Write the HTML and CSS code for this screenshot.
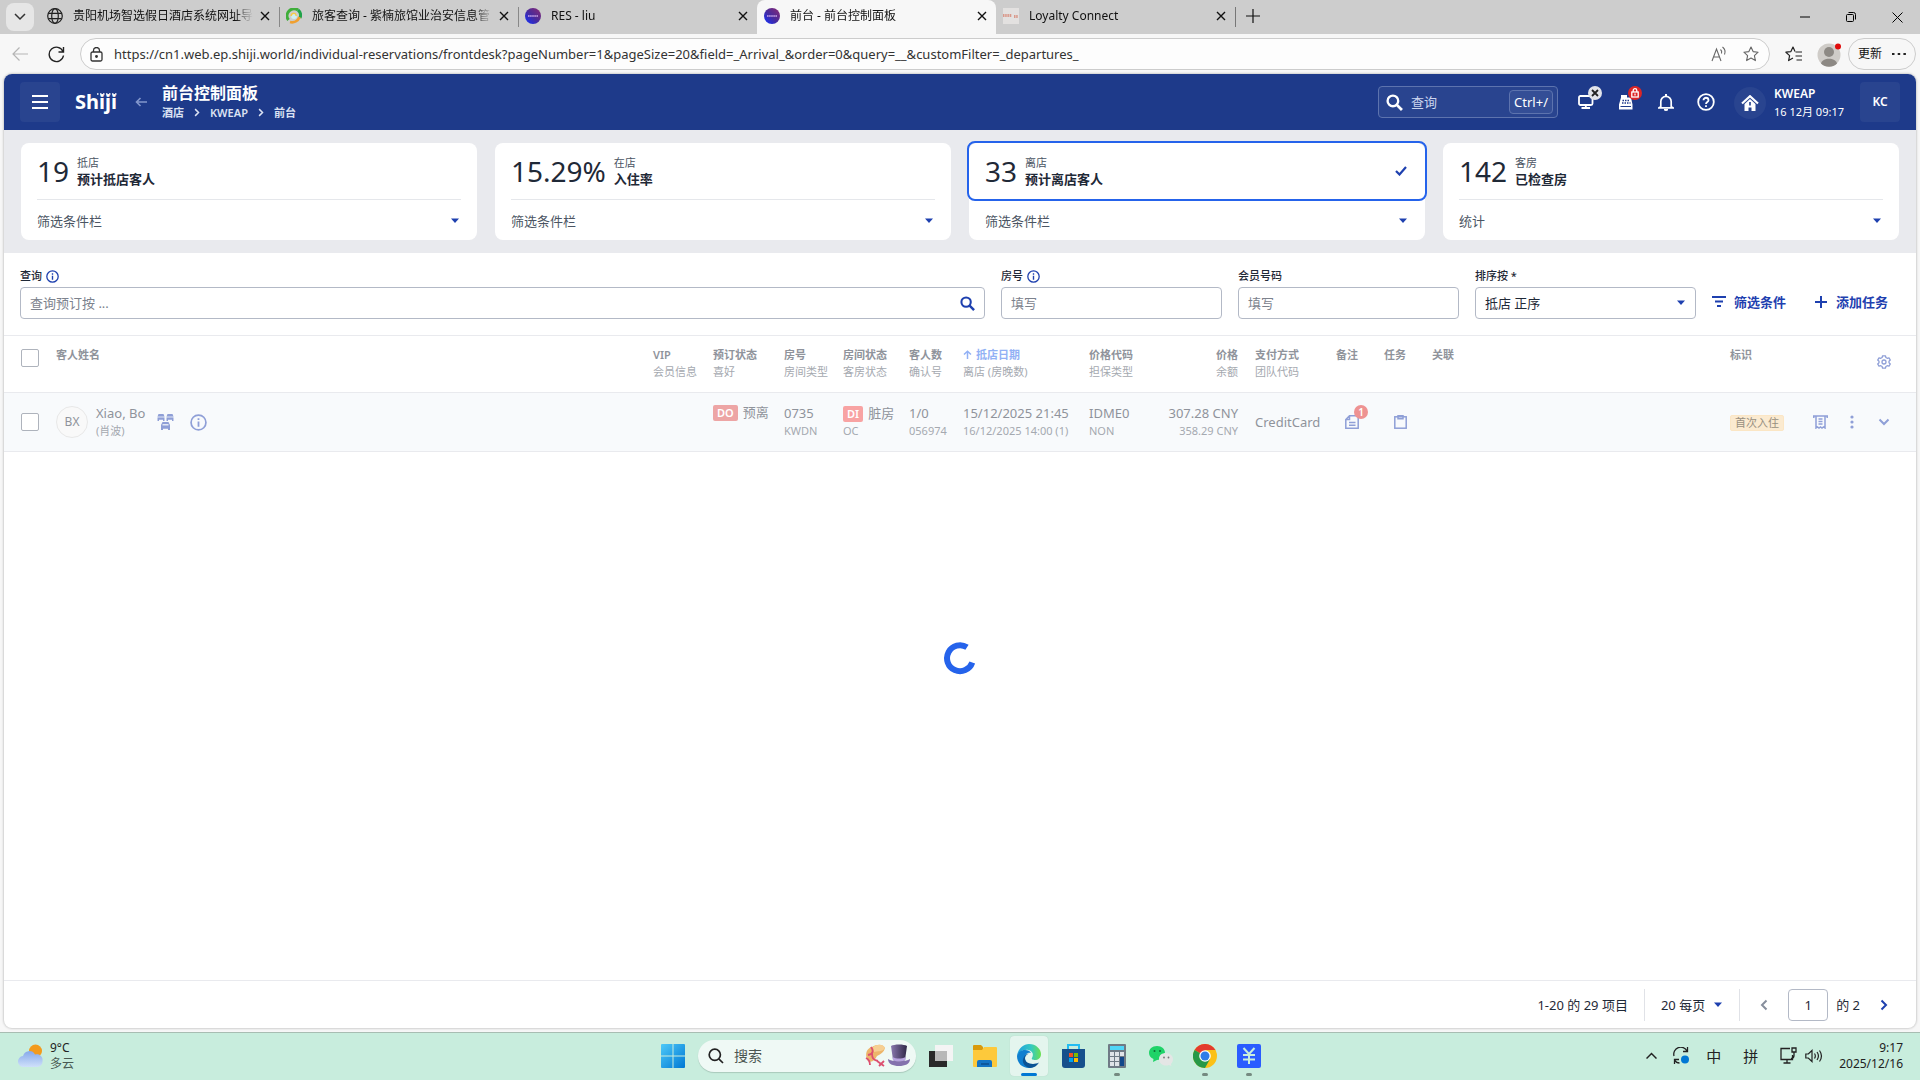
FILE: index.html
```html
<!DOCTYPE html>
<html lang="zh-CN">
<head>
<meta charset="utf-8">
<meta name="viewport" content="width=device-width, initial-scale=1">
<title>前台 - 前台控制面板</title>
<link rel="stylesheet" href="styles.css">
</head>
<body>
<svg class="defs" aria-hidden="true">
  <defs>
    <linearGradient id="g-fav" x1="1" y1="0" x2="0" y2="1"><stop offset="0" stop-color="#8c2a72"/><stop offset=".5" stop-color="#4a2a9a"/><stop offset="1" stop-color="#1030ff"/></linearGradient>
    <linearGradient id="g-win" x1="0" y1="0" x2="1" y2="1"><stop offset="0" stop-color="#4cc9f8"/><stop offset="1" stop-color="#0078d4"/></linearGradient>
    <linearGradient id="g-edge" x1="0" y1="0" x2="1" y2="0"><stop offset="0" stop-color="#1d9fe0"/><stop offset=".6" stop-color="#35c9c0"/><stop offset="1" stop-color="#6be04e"/></linearGradient>
    <linearGradient id="g-cloud" x1="0" y1="0" x2="0" y2="1"><stop offset="0" stop-color="#86a9ea"/><stop offset="1" stop-color="#cfe0fa"/></linearGradient>
    <linearGradient id="g-hat" x1="0" y1="0" x2="1" y2="0"><stop offset="0" stop-color="#8a78ae"/><stop offset="1" stop-color="#2f2747"/></linearGradient>
  </defs>
  <symbol id="i-close" viewBox="0 0 12 12"><path d="M2 2l8 8M10 2l-8 8" fill="none" stroke="currentColor" stroke-width="1.4"/></symbol>
  <symbol id="i-fav" viewBox="0 0 16 16"><circle cx="8" cy="8" r="8" fill="url(#g-fav)"/><path d="M3 8h10" stroke="#c9a5e8" stroke-width="1.6" stroke-dasharray="1.6 .5"/></symbol>
  <symbol id="i-caret" viewBox="0 0 10 6"><path d="M1 0.5h8L5 5z" fill="currentColor"/></symbol>
  <symbol id="i-info" viewBox="0 0 16 16"><circle cx="8" cy="8" r="7" fill="none" stroke="currentColor" stroke-width="1.6"/><path d="M8 7v5M8 4v1.7" stroke="currentColor" stroke-width="1.7"/></symbol>
  <symbol id="i-search" viewBox="0 0 16 16"><circle cx="6.5" cy="6.5" r="5" fill="none" stroke="currentColor" stroke-width="2.2"/><path d="M10 10l5 5" stroke="currentColor" stroke-width="2.6"/></symbol>
  <symbol id="i-chev" viewBox="0 0 8 12"><path d="M1.5 1.5L6 6l-4.500 4.500" fill="none" stroke="currentColor" stroke-width="2"/></symbol>
</svg>

<div class="tabstrip">
  <button class="tab-menu" aria-label="标签页操作"><svg width="12" height="8" viewBox="0 0 12 8"><path d="M1 1l5 5 5-5" fill="none" stroke="currentColor" stroke-width="1.5"/></svg></button>
  <div class="tab"><svg width="16" height="16" viewBox="0 0 16 16" fill="none" stroke="#222" stroke-width="1.200"><circle cx="8" cy="8" r="7.300"/><ellipse cx="8" cy="8" rx="3.300" ry="7.300"/><path d="M1.300 5.400h13.400M1.300 10.600h13.400"/></svg><span class="tab-title">贵阳机场智选假日酒店系统网址导</span><button class="tab-x" aria-label="关闭"><svg width="12" height="12"><use href="#i-close"/></svg></button></div>
  <div class="tab ruled"><svg width="16" height="16" viewBox="0 0 16 16"><path d="M2.500 12A7 7 0 0 1 12 2" fill="none" stroke="#3fae3a" stroke-width="3"/><path d="M12 2a7 7 0 0 1 2 8" fill="none" stroke="#1fa34a" stroke-width="3"/><path d="M4 14c4 1 8-1 9.500-5" fill="none" stroke="#f0a030" stroke-width="2.800"/><circle cx="8" cy="8" r="3" fill="#cfeff2"/><path d="M5 8c1-4 6-3 5 0" fill="none" stroke="#f7c948" stroke-width="1.500"/></svg><span class="tab-title">旅客查询 - 紫楠旅馆业治安信息管</span><button class="tab-x" aria-label="关闭"><svg width="12" height="12"><use href="#i-close"/></svg></button></div>
  <div class="tab ruled"><svg width="16" height="16"><use href="#i-fav"/></svg><span class="tab-title">RES - liu</span><button class="tab-x" aria-label="关闭"><svg width="12" height="12"><use href="#i-close"/></svg></button></div>
  <div class="tab active"><svg width="16" height="16"><use href="#i-fav"/></svg><span class="tab-title">前台 - 前台控制面板</span><button class="tab-x" aria-label="关闭"><svg width="12" height="12"><use href="#i-close"/></svg></button></div>
  <div class="tab"><svg width="16" height="16" viewBox="0 0 16 16"><path d="M0 0h16v16H0z" fill="#e3e1e0"/><path d="M0 7.500h9M11 8.500h4" stroke="#d9998b" stroke-width="3" stroke-dasharray="1.500 .7"/></svg><span class="tab-title">Loyalty Connect</span><button class="tab-x" aria-label="关闭"><svg width="12" height="12"><use href="#i-close"/></svg></button></div>
  <button class="tab-new" aria-label="新建标签页"><svg width="14" height="14" viewBox="0 0 14 14"><path d="M7 0v14M0 7h14" stroke="currentColor" stroke-width="1.200"/></svg></button>
  <div class="win-buttons">
    <button aria-label="最小化"><svg width="10" height="10" viewBox="0 0 10 10"><path d="M0 5h10" stroke="#000"/></svg></button>
    <button aria-label="还原"><svg width="10" height="10" viewBox="0 0 10 10" fill="none" stroke="#000"><rect x=".5" y="2.500" width="7" height="7" rx="1"/><path d="M2.500.5h5a2 2 0 0 1 2 2v5"/></svg></button>
    <button aria-label="关闭窗口"><svg width="11" height="11" viewBox="0 0 11 11"><path d="M.5.5l10 10M10.500.5l-10 10" stroke="#000"/></svg></button>
  </div>
</div>

<div class="toolbar">
  <button class="tool" aria-label="后退"><svg width="16" height="14" viewBox="0 0 16 14" fill="none" stroke="#b5b5b5" stroke-width="1.200"><path d="M16 7H1M7.500.5L1 7l6.500 6.500"/></svg></button>
  <button class="tool" aria-label="刷新"><svg width="17" height="17" viewBox="0 0 17 17" fill="none" stroke="#222" stroke-width="1.400"><path d="M15.500 9.500A7.200 7.200 0 1 1 15 5.500M15.500 1v5h-5"/></svg></button>
  <div class="address">
    <svg width="13" height="15" viewBox="0 0 13 15" fill="none" stroke="#333" stroke-width="1.300"><rect x="1" y="5" width="11" height="9" rx="1.500"/><path d="M3.500 5V3.500a3 3 0 0 1 6 0V5"/><circle cx="6.500" cy="9.500" r=".8" fill="#333"/></svg>
    <input type="text" aria-label="地址栏" value="https://cn1.web.ep.shiji.world/individual-reservations/frontdesk?pageNumber=1&amp;pageSize=20&amp;field=_Arrival_&amp;order=0&amp;query=__&amp;customFilter=_departures_">
    <svg width="16" height="16" viewBox="0 0 16 16" fill="none" stroke="#666" stroke-width="1.100"><path d="M1 15L5.500 3 10 15M2.500 11h6M9.500 3.500c1.200 1 1.500 2.500 1 4M11.500 1c2.500 2 3.200 4.500 2 7.500"/></svg>
    <svg width="16" height="16" viewBox="0 0 16 16" fill="none" stroke="#666" stroke-width="1.100" stroke-linejoin="round"><path d="M8 1l2.100 4.600 5 .6-3.700 3.400 1 5L8 12.100l-4.400 2.500 1-5L.9 6.200l5-.6z"/></svg>
  </div>
  <button class="tool" aria-label="收藏夹"><svg width="17" height="16" viewBox="0 0 17 16" fill="none" stroke="#222" stroke-width="1.200" stroke-linejoin="round"><path d="M10 5.600L8 1 5.900 5.600l-5 .6 3.700 3.400-1 5L8 12.100M10.500 6H17M10.500 10H17M11.500 14H17"/></svg></button>
  <button class="tool" aria-label="个人资料"><svg width="26" height="26" viewBox="0 0 26 26"><circle cx="12" cy="14" r="11.500" fill="#cfccc8"/><circle cx="12" cy="11" r="5" fill="#8d8984"/><path d="M4 22.500c1-6.500 15-6.500 16 0a11.500 11.500 0 0 1-16 0z" fill="#8d8984"/><circle cx="21" cy="5.500" r="3" fill="#e00b0b"/></svg></button>
  <button class="update">更新<svg width="14" height="4" viewBox="0 0 14 4"><path d="M0 1h2.500v2H0zM5.700 1h2.500v2H5.700zM11.400 1h2.500v2h-2.500z" fill="#222"/></svg></button>
</div>

<main class="app">
  <header class="app-bar">
    <button class="square" aria-label="菜单"><svg width="16" height="14" viewBox="0 0 16 14"><path d="M0 1h16M0 7h16M0 13h16" stroke="#fff" stroke-width="2"/></svg></button>
    <a class="logo" href="#">Shiji<svg width="20" height="2" viewBox="0 0 20 2"><path d="M0 1h20" stroke="#fff" stroke-width="1.500" stroke-dasharray="1.500 1.500"/></svg></a>
    <button class="back" aria-label="返回"><svg width="12" height="10" viewBox="0 0 12 10" fill="none" stroke="#8296cc" stroke-width="1.600"><path d="M12 5H1.500M5.500 1l-4 4 4 4"/></svg></button>
    <div class="heading">
      <h1>前台控制面板</h1>
      <nav class="crumbs"><a href="#">酒店</a><svg width="6" height="9"><use href="#i-chev"/></svg><a href="#">KWEAP</a><svg width="6" height="9"><use href="#i-chev"/></svg><a href="#">前台</a></nav>
    </div>
    <label class="quick"><svg width="17" height="17"><use href="#i-search"/></svg><input type="text" aria-label="查询" placeholder="查询"><kbd>Ctrl+/</kbd></label>
    <div class="bar-icons">
      <button class="bar-icon" aria-label="终端"><svg width="16" height="14" viewBox="0 0 16 14" fill="none" stroke="#fff"><rect x="1" y="1" width="13.500" height="9" rx="1.500" stroke-width="1.800"/><path d="M7.800 10v3M3.500 13h8.500" stroke-width="1.800"/></svg><span class="dot grey"><svg width="8" height="8" viewBox="0 0 8 8"><path d="M1 1l6 6M7 1L1 7" stroke="#222" stroke-width="1.800"/></svg></span></button>
      <button class="bar-icon" aria-label="收银"><svg width="16" height="15" viewBox="0 0 16 15"><path d="M3 0h6v2.500h4l1.500 7v5H1v-5L3 2.500z" fill="#fff"/><path d="M4.500 5.500h7.500M4 8h8.500" stroke="#1e3a8a" stroke-width="1.300" stroke-dasharray="1.500 1"/><path d="M2.500 11.500h10.500" stroke="#1e3a8a" stroke-width="1.200"/></svg><span class="dot red"><svg width="8" height="10" viewBox="0 0 8 10" fill="none" stroke="#fff" stroke-width="1.300"><rect x=".8" y="4" width="6.400" height="5"/><path d="M2.200 4V2.500a1.800 1.800 0 0 1 3.600 0V4M4 5.500v2"/></svg></span></button>
      <button class="bar-icon" aria-label="通知"><svg width="16" height="17" viewBox="0 0 16 17"><path d="M2.800 12.500V7.500a5.200 5.200 0 0 1 10.400 0v5l1.800 1.300H1z" fill="none" stroke="#fff" stroke-width="1.700"/><path d="M6 15h4v1a2 1 0 0 1-4 0zM7 0h2v2H7z" fill="#fff"/></svg></button>
      <button class="bar-icon" aria-label="帮助"><svg width="18" height="18" viewBox="0 0 18 18" fill="none" stroke="#fff" stroke-width="1.800"><circle cx="9" cy="9" r="7.800"/><path d="M6.500 7.200c0-3.300 5-3.300 5 0 0 1.800-2.500 1.800-2.500 3.800M9 12.200v1.800"/></svg></button>
    </div>
    <div class="property">
      <span class="home"><svg width="18" height="16" viewBox="0 0 18 16"><path d="M1 8.500L9 1.200l8 7.300" fill="none" stroke="#fff" stroke-width="2.200"/><path d="M3.500 9L9 4l5.500 5v7h-4v-3.500h-3V16h-4z" fill="#fff"/><path d="M9 7v3.500" stroke="#1e3a8a" stroke-width="1.600"/></svg></span>
      <div><strong>KWEAP</strong><span>16 12月 09:17</span></div>
    </div>
    <button class="square user">KC</button>
  </header>

  <section class="stats">
    <article class="card"><div class="card-top"><span class="num">19</span><div><small>抵店</small><strong>预计抵店客人</strong></div></div><button class="card-foot">筛选条件栏<svg width="10" height="6"><use href="#i-caret"/></svg></button></article>
    <article class="card"><div class="card-top"><span class="num">15.29%</span><div><small>在店</small><strong>入住率</strong></div></div><button class="card-foot">筛选条件栏<svg width="10" height="6"><use href="#i-caret"/></svg></button></article>
    <article class="card selected"><div class="card-top"><span class="num">33</span><div><small>离店</small><strong>预计离店客人</strong></div><svg class="tick" width="12" height="10" viewBox="0 0 12 10"><path d="M1 5l3.500 3.500L11 1" fill="none" stroke="#1e40af" stroke-width="2.200"/></svg></div><button class="card-foot">筛选条件栏<svg width="10" height="6"><use href="#i-caret"/></svg></button></article>
    <article class="card"><div class="card-top"><span class="num">142</span><div><small>客房</small><strong>已检查房</strong></div></div><button class="card-foot">统计<svg width="10" height="6"><use href="#i-caret"/></svg></button></article>
  </section>

  <form class="filters" onsubmit="return false">
    <div class="field"><label for="q">查询 <svg width="13" height="13"><use href="#i-info"/></svg></label><div class="box"><input id="q" type="text" placeholder="查询预订按 ..."><svg width="15" height="15"><use href="#i-search"/></svg></div></div>
    <div class="field"><label for="room">房号 <svg width="13" height="13"><use href="#i-info"/></svg></label><div class="box"><input id="room" type="text" placeholder="填写"></div></div>
    <div class="field"><label for="member">会员号码</label><div class="box"><input id="member" type="text" placeholder="填写"></div></div>
    <div class="field"><label for="sort">排序按 *</label><div class="box"><select id="sort"><option>抵店 正序</option></select><svg width="10" height="6"><use href="#i-caret"/></svg></div></div>
    <button class="link-btn" type="button"><svg width="14" height="12" viewBox="0 0 14 12"><path d="M0 1h14M3 5.500h8M5 10h4" stroke="currentColor" stroke-width="2"/></svg>筛选条件</button>
    <button class="link-btn" type="button"><svg width="14" height="14" viewBox="0 0 14 14"><path d="M7 1v12M1 7h12" stroke="currentColor" stroke-width="2"/></svg>添加任务</button>
  </form>

  <div class="results">
    <table>
      <colgroup><col class="w52"><col><col class="w60"><col class="w71"><col class="w59"><col class="w66"><col class="w54"><col class="w126"><col class="w61"><col class="w105"><col class="w81"><col class="w48"><col class="w48"><col class="w298"><col class="w74"><col class="w112"></colgroup>
      <thead><tr>
        <th class="pick"><input type="checkbox" aria-label="全选"></th>
        <th>客人姓名</th>
        <th>VIP<small>会员信息</small></th>
        <th>预订状态<small>喜好</small></th>
        <th>房号<small>房间类型</small></th>
        <th>房间状态<small>客房状态</small></th>
        <th>客人数<small>确认号</small></th>
        <th><a href="#" class="sorted"><svg width="9" height="9" viewBox="0 0 9 9" fill="none" stroke="currentColor" stroke-width="1.500"><path d="M4.500 9V1.200M1 4.500l3.500-3.300L8 4.500"/></svg>抵店日期</a><small>离店 (房晚数)</small></th>
        <th>价格代码<small>担保类型</small></th>
        <th class="price">价格<small>余额</small></th>
        <th>支付方式<small>团队代码</small></th>
        <th>备注</th>
        <th>任务</th>
        <th>关联</th>
        <th>标识</th>
        <th class="gear"><button aria-label="设置"><svg width="14" height="14" viewBox="0 0 14 14" fill="none" stroke="currentColor" stroke-width="1.300" stroke-linejoin="round"><path d="M5.600.8h2.800l.5 1.700 1.300.8 1.800-.5 1.300 2.300L12 6.300v1.400l1.300 1.200-1.300 2.300-1.800-.5-1.300.8-.5 1.700H5.600l-.5-1.700-1.300-.8-1.800.5L.7 8.900 2 7.700V6.300L.7 5.100 2 2.800l1.800.5 1.300-.8z"/><circle cx="7" cy="7" r="2"/></svg></button></th>
      </tr></thead>
      <tbody><tr>
        <td class="pick"><input type="checkbox" aria-label="选择 Xiao, Bo"></td>
        <td><div class="guest"><span class="initials">BX</span><div class="pair">Xiao, Bo<small>(肖波)</small></div>
          <svg width="17" height="16" viewBox="0 0 17 16" fill="currentColor"><path d="M1.500 0h5l1 2.500V7H6V5.800H2V7H.500V2.500zM10.500 0h5l1 2.500V7H15V5.800h-4V7H9.500V2.500z"/><path d="M5.500 8h6l1.500 3v5h-2v-1.300H6V16H4v-5z"/><path d="M0 3h17" stroke="#f8fafc" stroke-width=".8"/><path d="M5.500 10.800h6" stroke="#f8fafc" stroke-width="1.200"/></svg>
          <svg width="17" height="17"><use href="#i-info"/></svg></div></td>
        <td></td>
        <td><div class="pair raised"><span><b class="badge do">DO</b>预离</span><small>&nbsp;</small></div></td>
        <td><div class="pair">0735<small>KWDN</small></div></td>
        <td><div class="pair"><span><b class="badge di">DI</b>脏房</span><small>OC</small></div></td>
        <td><div class="pair">1/0<small>056974</small></div></td>
        <td><div class="pair">15/12/2025 21:45<small>16/12/2025 14:00 (1)</small></div></td>
        <td><div class="pair">IDME0<small>NON</small></div></td>
        <td class="price"><div class="pair">307.28 CNY<small>358.29 CNY</small></div></td>
        <td>CreditCard</td>
        <td><button class="row-icon" aria-label="备注"><svg width="14" height="14" viewBox="0 0 14 14" fill="none" stroke="currentColor" stroke-width="1.500"><path d="M4.500.8h8.700v12.400H.8V4.500zM4.500 1v3.500H1M4 7.500h6.500M4 10.300h6.500"/></svg><span class="count">1</span></button></td>
        <td><button class="row-icon" aria-label="任务"><svg width="13" height="14" viewBox="0 0 13 14" fill="none" stroke="currentColor" stroke-width="1.500"><rect x=".8" y="1.800" width="11.400" height="11.400"/><path d="M4 .8h5v3H4z"/></svg></button></td>
        <td></td>
        <td><span class="tag">首次入住</span></td>
        <td><div class="actions">
          <button aria-label="账单"><svg width="15" height="14" viewBox="0 0 15 14" fill="none" stroke="currentColor" stroke-width="1.500"><path d="M0 1h15M3 1v12l1.500-1 1.500 1 1.500-1 1.500 1 1.500-1 1.500 1V1M5.500 4h4M5.500 6.500h4M5.500 9h4M.8 1v2M14.200 1v2"/></svg></button>
          <button aria-label="更多"><svg width="4" height="14" viewBox="0 0 4 14" fill="currentColor"><circle cx="2" cy="2" r="1.600"/><circle cx="2" cy="7" r="1.600"/><circle cx="2" cy="12" r="1.600"/></svg></button>
          <button aria-label="展开"><svg width="12" height="8" viewBox="0 0 12 8"><path d="M1.500 1.500L6 6l4.500-4.500" fill="none" stroke="currentColor" stroke-width="2"/></svg></button>
        </div></td>
      </tr></tbody>
    </table>
    <svg class="spinner" width="34" height="34" viewBox="0 0 34 34" role="img" aria-label="加载中"><path d="M24 6.200A13 13 0 1 0 29.300 21.500" fill="none" stroke="#2563eb" stroke-width="6"/></svg>
  </div>

  <footer class="pager">
    <span>1-20 的 29 项目</span>
    <button class="per-page">20 每页<svg width="10" height="6"><use href="#i-caret"/></svg></button>
    <div class="pages">
      <button class="prev" aria-label="上一页"><svg width="8" height="12" viewBox="0 0 8 12"><path d="M6.500 1.500L2 6l4.500 4.500" fill="none" stroke="currentColor" stroke-width="2"/></svg></button>
      <input type="text" aria-label="页码" value="1">
      <span>的 2</span>
      <button class="next" aria-label="下一页"><svg width="8" height="12"><use href="#i-chev"/></svg></button>
    </div>
  </footer>
</main>

<div class="taskbar">
  <div class="weather"><svg width="26" height="24" viewBox="0 0 26 24"><circle cx="17.500" cy="7" r="6.500" fill="#f39a1c"/><path d="M6 23a5.500 5.500 0 0 1-1-11 6.500 6.500 0 0 1 12-1.500A5.800 5.800 0 0 1 24.500 17 5.500 5.500 0 0 1 19 23z" fill="url(#g-cloud)"/></svg><div>9°C<span>多云</span></div></div>
  <div class="dock">
    <button class="dock-item" aria-label="开始"><svg width="24" height="24" viewBox="0 0 24 24" fill="url(#g-win)"><path d="M0 1a1 1 0 0 1 1-1h10.500v11.500H0zM12.500 0H23a1 1 0 0 1 1 1v10.500H12.500zM0 12.500h11.500V24H1a1 1 0 0 1-1-1zM12.500 12.500H24V23a1 1 0 0 1-1 1H12.500z"/></svg></button>
    <label class="task-search"><svg width="16" height="16" viewBox="0 0 16 16" fill="none" stroke="#222" stroke-width="1.700"><circle cx="6.800" cy="6.800" r="5.600"/><path d="M10.800 10.800L15 15"/></svg><input type="text" aria-label="搜索" placeholder="搜索">
      <svg width="47" height="24" viewBox="0 0 47 24"><path d="M4 17C0 10 3 4 8 3c5-3 11-3 13 1-1 4-4 6-8 8-2 4-5 7-9 5z" fill="#edb56a"/><path d="M9 3c5-3 10-3 12 1-2 4-8 3-11 4z" fill="#f6cf93"/><path d="M7 3c3 4 2 7-3 8M2 14c2 1 4 4 4 7M8 9c0 5 1 7 6 8M13 17l7 5M15 22l5-5" fill="none" stroke="#dc4f70" stroke-width="1.800"/><path d="M24 15c4 3 18 3 22 0 0 5-5 7-11 7s-11-2-11-7z" fill="#8471ad"/><path d="M27 2c3-2 13-2 16 0l-2 14c-3 2-9 2-12 0z" fill="url(#g-hat)"/><path d="M28.500 13c4 2 9 2 13 0v3c-4 2-9 2-12.500 0z" fill="#b7a3df"/></svg></label>
    <button class="dock-item" aria-label="任务视图"><svg width="24" height="22" viewBox="0 0 24 22"><path d="M0 6h18v16H0z" fill="#292929"/><path d="M6 0h18v16H6z" fill="#f4f4f4"/><path d="M6 6h12v10H6z" fill="#b8b8b8"/></svg></button>
    <button class="dock-item" aria-label="文件资源管理器"><svg width="24" height="22" viewBox="0 0 24 22"><path d="M0 1a1 1 0 0 1 1-1h7l2 2v5H0z" fill="#d99a0b"/><path d="M0 5h9l2-3h12a1 1 0 0 1 1 1v18a1 1 0 0 1-1 1H1a1 1 0 0 1-1-1z" fill="#fdc93b"/><path d="M4 22v-5a2 2 0 0 1 2-2h11a2 2 0 0 1 2 2v5z" fill="#1474c4"/><path d="M8 19h8" stroke="#0b4f91" stroke-width="1.500"/></svg></button>
    <button class="dock-item current" aria-label="Edge"><svg width="24" height="24" viewBox="0 0 24 24"><path d="M0 12C1 4 7 0 12 0c7 0 12 5 12 10 0 4-3 6-6 6-2 0-4-1-3-2 3-5-2-9-6-8-5 0-8 3-9 6z" fill="url(#g-edge)"/><path d="M0 12c1-4 4-6 8-6 3 0 5 1 6 3-4-1-6 2-6 5 0 5 5 8 10 8-2 1-4 2-6 2C5 24 0 19 0 12z" fill="#0f7fd0"/><path d="M12 9.500c-3 1-4 3-4 5 0 5 8 7 14 4-2 3-5 5.500-9 5.500-5-1-8-5-7-9 1-3 3-5.500 6-5.500z" fill="#0b5394"/></svg></button>
    <button class="dock-item" aria-label="应用商店"><svg width="23" height="24" viewBox="0 0 23 24"><path d="M6 6V1h11v5" fill="none" stroke="#22bdf2" stroke-width="2"/><path d="M0 5h23v16a3 3 0 0 1-3 3H3a3 3 0 0 1-3-3z" fill="#17508c"/><path d="M7 9h4v4H7z" fill="#f25022"/><path d="M12 9h4v4h-4z" fill="#7fba00"/><path d="M7 14h4v4H7z" fill="#00a4ef"/><path d="M12 14h4v4h-4z" fill="#ffb900"/></svg></button>
    <button class="dock-item running" aria-label="计算器"><svg width="18" height="24" viewBox="0 0 18 24"><rect width="18" height="24" rx="1" fill="#6f7a85"/><path d="M2 2h14v4H2z" fill="#4fd6f7"/><path d="M2 8h4v4H2zM7 8h4v4H7zM12 8h4v4h-4zM2 13h4v4H2zM7 13h4v4H7zM2 18h4v4H2zM7 18h4v4H7z" fill="#dfe3e8"/><path d="M12 13h4v9h-4z" fill="#12478a"/></svg></button>
    <button class="dock-item" aria-label="微信"><svg width="24" height="20" viewBox="0 0 24 20"><path d="M8 0c5 0 8 3 8 7s-3 7-8 7l-4 2 .5-3C2 12 0 10 0 7c0-4 3-7 8-7z" fill="#1fd368"/><path d="M17 7c4 0 7 3 7 6 0 2-1 4-2 5l.3 2-2.300-1c-6 2-10-2-10-6s3-6 7-6z" fill="#e4e6e5"/><circle cx="5.500" cy="5" r="1" fill="#0c6b34"/><circle cx="11" cy="5" r="1" fill="#0c6b34"/><circle cx="15" cy="11.500" r=".9" fill="#777"/><circle cx="19.500" cy="11.500" r=".9" fill="#777"/></svg></button>
    <button class="dock-item running" aria-label="Chrome"><svg width="24" height="24" viewBox="0 0 24 24"><circle cx="12" cy="12" r="12" fill="#fbc116"/><path d="M12 12L1.600 6A12 12 0 0 1 22.400 6z" fill="#e33b2e"/><path d="M12 12L1.600 6A12 12 0 0 0 12 24l5-9z" fill="#279847"/><path d="M12 6h10.400L17 15z" fill="#fbc116"/><circle cx="12" cy="12" r="5.800" fill="#fff"/><circle cx="12" cy="12" r="4.500" fill="#2f7de8"/></svg></button>
    <button class="dock-item running" aria-label="收款"><svg width="24" height="24" viewBox="0 0 24 24"><rect width="24" height="24" rx="2" fill="#2a5cff"/><path d="M6.500 4l5.500 6 5.500-6M12 10v10M6 11h12M6 15.500h12" fill="none" stroke="#c8eedd" stroke-width="2"/></svg></button>
  </div>
  <div class="tray">
    <svg width="11" height="7" viewBox="0 0 11 7"><path d="M.5 6.500l5-5 5 5" fill="none" stroke="#222" stroke-width="1.500"/></svg>
    <svg width="17" height="17" viewBox="0 0 17 17" fill="none" stroke="#222" stroke-width="1.300"><path d="M1 9A7 7 0 0 1 14 4M14.500 0v4.500H10M1.500 17v-4.500H6M2 13.500c1 2 3 2.500 4.500 2.500"/><circle cx="12" cy="12.500" r="4" fill="#0078d4" stroke="none"/></svg>
    <span class="ime">中</span>
    <span class="ime wide">拼</span>
    <svg width="17" height="17" viewBox="0 0 17 17" fill="none" stroke="#222" stroke-width="1.300"><path d="M10 1.500H1v11h11.500V8M7 12.500V16M3.500 16h7M12 1h4v4h-4zM14 5v3.500c0 2-1.500 3-3 3"/></svg>
    <svg width="18" height="14" viewBox="0 0 18 14" fill="none" stroke="#222" stroke-width="1.200"><path d="M.8 5v4h2.500L7 12.500v-11L3.300 5zM9.500 4.500c1 1.500 1 3.500 0 5M12 3c1.800 2.500 1.800 5.500 0 8M14.500 1.500c2.500 3.500 2.500 7.500 0 11"/></svg>
    <div class="clock">9:17<span>2025/12/16</span></div>
  </div>
</div>
</body>
</html>
```
FILE: styles.css
```css
* { box-sizing: border-box; }
body {
  margin: 0;
  min-height: 100vh;
  display: flex;
  flex-direction: column;
  background: #f7f7f7;
  font: 13px/16px "Noto Sans", "Noto Sans CJK SC", sans-serif;
  color: #1f2937;
}
button, input, select { font: inherit; color: inherit; margin: 0; }
button { border: 0; padding: 0; background: none; display: flex; align-items: center; justify-content: center; flex: none; }
input, select { border: 0; padding: 0; background: none; outline: 0; min-width: 0; }
a { color: inherit; text-decoration: none; }
svg { display: block; flex: none; }
small { display: block; font-size: 11px; font-weight: 400; }
.defs { position: absolute; width: 0; height: 0; }

/* browser window */
.tabstrip { display: flex; height: 34px; background: #cdcdcd; color: #111; font-size: 12px; }
.tab-menu { width: 28px; height: 28px; margin: 3px 6px; border-radius: 8px; background: #e6e6e6; color: #333; }
.tab { flex: 0 1 239px; min-width: 0; display: flex; align-items: center; padding: 0 8px 2px 7px; position: relative; }
.tab.ruled::before { content: ""; position: absolute; left: 0; top: 7px; width: 1px; height: 20px; background: #888; }
.tab.active { background: #f7f7f7; border-radius: 8px 8px 0 0; }
.tab-title { flex: 1; min-width: 0; margin-left: 10px; overflow: hidden; white-space: nowrap; mask-image: linear-gradient(90deg, #000 90%, transparent); }
.tab-x { width: 12px; height: 12px; margin-left: 6px; }
.tab-new { width: 36px; height: 32px; position: relative; }
.tab-new::before { content: ""; position: absolute; left: 0; top: 7px; width: 1px; height: 20px; background: #777; }
.win-buttons { display: flex; margin-left: auto; }
.win-buttons button { width: 46px; }
.toolbar { display: flex; align-items: center; height: 40px; padding-right: 4px; }
.tool { width: 36px; height: 32px; }
.toolbar > .tool:first-child { margin-left: 2px; }
.address { flex: 1; min-width: 0; height: 32px; display: flex; align-items: center; gap: 16px; margin: 0 6px; padding: 0 10px 0 9px; border: 1px solid #ccc; border-radius: 16px; background: #fdfdfd; }
.address input { flex: 1; margin-left: -5px; color: #333; }
.update { height: 32px; padding: 0 9px; gap: 10px; border: 1px solid #ccc; border-radius: 16px; font-size: 12px; color: #111; }

/* app bar */
.app { flex: 1; display: flex; flex-direction: column; margin: 0 4px 4px; border-radius: 8px; overflow: hidden; background: #fff; box-shadow: 0 0 2px 1px #d0d0d0; }
.app-bar { display: flex; align-items: center; height: 56px; padding: 0 16px; background: #1e3a8a; color: #fff; }
.square { width: 40px; height: 40px; border-radius: 4px; background: #29448f; }
.user { font-weight: 600; font-size: 12px; }
.logo { position: relative; margin-left: 15px; width: 44px; font-size: 20px; line-height: 28px; font-weight: 700; }
.logo svg { position: absolute; left: 22px; top: 5px; }
.back { width: 12px; margin-left: 16px; }
.heading { margin-left: 15px; }
h1 { margin: 0; font-size: 16px; line-height: 20px; font-weight: 700; }
.crumbs { display: flex; align-items: center; gap: 10px; padding-top: 1px; font-size: 11px; line-height: 18px; font-weight: 600; color: #dbe2f3; }
.quick { display: flex; align-items: center; width: 180px; height: 32px; margin-left: auto; padding: 0 4px 0 7px; border: 1px solid #5d73ae; border-radius: 4px; background: #29448f; }
.quick input { flex: 1; margin-left: 8px; }
.quick input::placeholder { color: #cbd5ee; opacity: 1; }
kbd { padding: 3px 4px; font: 13px/16px "Noto Sans", sans-serif; border: 1px solid #5d73ae; border-radius: 4px; background: #344e96; }
.bar-icons { display: flex; margin-left: 8px; }
.bar-icon { position: relative; width: 40px; height: 32px; }
.dot { position: absolute; left: 22px; top: 0; width: 14px; height: 14px; border-radius: 50%; display: flex; align-items: center; justify-content: center; }
.grey { background: #e2e4ea; }
.red { background: #dc2626; }
.property { display: flex; align-items: center; gap: 8px; margin: 0 16px 0 8px; padding-top: 1px; font-size: 12px; line-height: 18px; white-space: nowrap; }
.property strong, .property div span { display: block; font-weight: 600; }
.property div span { font-size: 11px; font-weight: 400; }
.home { width: 32px; height: 32px; border-radius: 50%; background: #29448f; display: flex; align-items: center; justify-content: center; }

/* statistics */
.stats { display: grid; grid-template-columns: repeat(4, 1fr); gap: 18px; padding: 13px 17px; background: #e9eaee; }
.card { border-radius: 8px; background: #fff; }
.card-top { display: flex; align-items: center; gap: 8px; height: 57px; margin: 0 16px; border-bottom: 1px solid #e5e7eb; line-height: 17px; }
.num { font-size: 28px; line-height: 32px; }
.card small { color: #4b5563; }
.card strong { display: block; }
.selected .card-top { margin: -2px -2px 0; height: 60px; padding: 0 18px 0 16px; border: 2px solid #2563eb; border-radius: 8px; }
.tick { margin-left: auto; }
.card-foot { width: 100%; height: 40px; padding: 2px 17px 0 16px; justify-content: space-between; color: #4b5563; }
.selected .card-foot { height: 39px; padding-top: 0; }
.card-foot svg, .box > svg, .per-page svg { color: #1e40af; }

/* filters */
.filters { display: grid; grid-template-columns: minmax(0, 1fr) repeat(3, 221px) auto auto; gap: 16px; align-items: end; padding: 14px 28px 16px 16px; border-bottom: 1px solid #e9eaee; }
.field label { display: flex; align-items: center; gap: 4px; height: 20px; padding-bottom: 2px; font-size: 11px; font-weight: 500; }
.field label svg { color: #1e40af; }
.box { display: flex; align-items: center; height: 32px; padding: 0 9px; border: 1px solid #b3b9c6; border-radius: 4px; }
.box input, .box select { flex: 1; appearance: none; }
.box input::placeholder { color: #7c828d; opacity: 1; }
.link-btn { gap: 8px; height: 32px; padding-bottom: 2px; color: #1e40af; font-weight: 700; }
.link-btn + .link-btn { margin-left: 12px; }

/* reservations */
.results { flex: 1; position: relative; }
table { width: 100%; table-layout: fixed; border-spacing: 0; color: #8f939b; }
th { height: 57px; padding: 10px 0 0; text-align: left; vertical-align: top; font-size: 11px; line-height: 17px; font-weight: 600; white-space: nowrap; border-bottom: 1px solid #e9eaee; }
td { height: 59px; padding: 0; white-space: nowrap; background: #f8fafc; border-bottom: 1px solid #e9eaee; }
th small, td small { color: #a5a9b0; }
.w48 { width: 48px; } .w52 { width: 52px; } .w54 { width: 54px; } .w59 { width: 59px; }
.w60 { width: 60px; } .w61 { width: 61px; } .w66 { width: 66px; } .w71 { width: 71px; }
.w74 { width: 74px; } .w81 { width: 81px; } .w105 { width: 105px; } .w112 { width: 112px; }
.w126 { width: 126px; } .w298 { width: 298px; }
.pick { padding-left: 17px; }
.pick input { display: block; appearance: none; width: 18px; height: 18px; border: 1px solid #aeb3bc; border-radius: 2px; background: #fff; }
th.pick { padding-top: 13px; }
.price { text-align: right; padding-right: 17px; }
.sorted { display: flex; align-items: center; gap: 4px; color: #92b1f5; }
.gear button { width: 32px; height: 32px; margin-left: 64px; color: #8f9fd7; }
.pair { line-height: 18px; }
.raised { padding-bottom: 2px; }
.guest { display: flex; align-items: center; gap: 16px; color: #8f9fd7; }
.guest .pair { margin: 0 -4px 0 -8px; color: #8f939b; }
.initials { width: 32px; height: 32px; border: 1px solid #e8e8e8; border-radius: 50%; background: #f9f9f9; color: #8f939b; font-size: 12px; line-height: 30px; text-align: center; }
.badge { display: inline-block; margin-right: 5px; padding: 0 4px; border-radius: 2px; color: #fff; font-size: 11px; line-height: 16px; font-weight: 600; }
.do { background: #eda5a5; }
.di { background: #f8a3a3; }
.row-icon { position: relative; width: 32px; height: 32px; color: #8f9fd7; }
.count { position: absolute; left: 18px; top: -1px; width: 14px; height: 14px; border-radius: 50%; background: #ee9292; color: #fff; font-size: 10px; line-height: 14px; font-weight: 600; }
.tag { display: inline-block; padding: 0 4px; border: 1px solid #fbe6c5; border-radius: 2px; background: #fbead0; font-size: 11px; line-height: 14px; color: #988f80; }
.actions { display: flex; color: #8f9fd7; }
.actions button { width: 32px; height: 32px; }
.spinner { position: absolute; left: 50%; top: 50%; transform: translate(-50%, -50%); }

/* pager */
.pager { display: flex; justify-content: flex-end; align-items: center; height: 48px; padding-right: 16px; border-top: 1px solid #e9eaee; }
.per-page { height: 32px; gap: 8px; margin-left: 16px; padding: 0 16px; border: solid #e0e2e7; border-width: 0 1px; }
.pages { display: flex; align-items: center; margin-left: 8px; }
.pages input { width: 40px; height: 32px; margin: 0 8px; border: 1px solid #b3b9c6; border-radius: 4px; text-align: center; }
.prev, .next { width: 32px; height: 32px; color: #1e40af; }
.prev { color: #868e9c; }
.next { margin-left: 8px; }

/* taskbar */
.taskbar { display: grid; grid-template-columns: 1fr auto 1fr; align-items: center; height: 48px; padding-bottom: 2px; border-top: 1px solid #a8bdb2; background: #c8eddd; font-size: 12px; color: #222; }
.weather { display: flex; align-items: center; gap: 6px; padding-left: 18px; }
.weather span, .clock span { display: block; }
.weather span { color: #4a5a53; }
.dock { display: flex; align-items: center; gap: 6px; padding-left: 2px; }
.dock-item { position: relative; width: 38px; height: 40px; border-radius: 4px; }
.task-search { display: flex; align-items: center; width: 218px; height: 32px; padding: 0 5px 0 10px; border-radius: 16px; background: #eff9f5; box-shadow: 0 1px 1px #a9c9bb; }
.task-search input { flex: 1; margin-left: 10px; font-size: 14px; }
.task-search input::placeholder { color: #4a5550; opacity: 1; }
.current { background: #e4f5ee; box-shadow: 0 0 1px #a9c9bb; }
.current::after, .running::after { content: ""; position: absolute; left: 16px; bottom: 0; width: 6px; height: 3px; border-radius: 2px; background: #758a80; }
.current::after { left: 11px; width: 16px; background: #0078d4; }
.tray { display: flex; align-items: center; justify-content: flex-end; padding-right: 17px; }
.tray svg + svg { margin-left: 8px; }
.tray svg:first-child { margin-right: 8px; }
.ime { font-size: 15px; margin-left: 16px; }
.ime.wide { margin: 0 22px; }
.clock { margin-left: 16px; text-align: right; line-height: 16px; }
```
